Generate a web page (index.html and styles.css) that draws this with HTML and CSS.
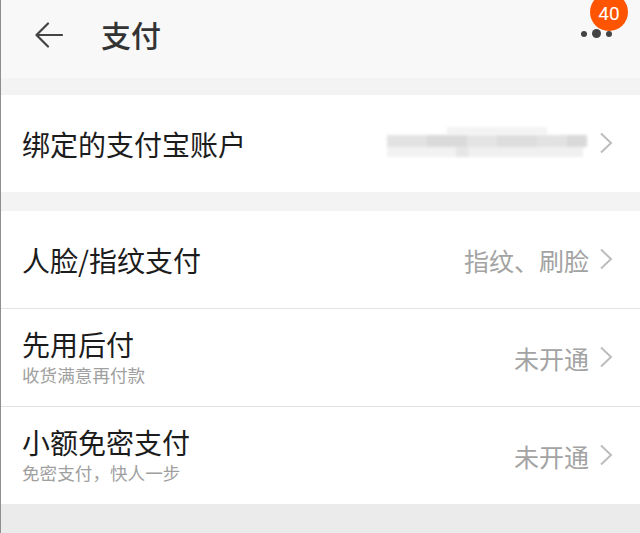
FILE: index.html
```html
<!DOCTYPE html>
<html lang="zh-CN">
<head>
<meta charset="utf-8">
<title>支付</title>
<link rel="stylesheet" href="styles.css">
</head>
<body>
<div class="page">
  <header class="topbar">
    <svg class="back" width="28" height="26" viewBox="0 0 28 26" aria-hidden="true">
      <path d="M27 13 H2 M13 1.5 L1.5 13 L13 24.5" fill="none" stroke="#444" stroke-width="2.2" stroke-linecap="round" stroke-linejoin="round"/>
    </svg>
    <h1 class="title">支付</h1>
    <div class="more">
      <span class="dot"></span><span class="dot dot-big"></span><span class="dot"></span>
      <span class="badge">40</span>
    </div>
  </header>

  <section class="card card-first">
    <div class="row">
      <div class="row-main"><div class="row-title">绑定的支付宝账户</div></div>
      <div class="row-value blurred" aria-label="隐藏的账户">
        <span class="mosaic m1"></span><span class="mosaic m2"></span><span class="mosaic m3"></span>
      </div>
      <svg class="chev" width="14" height="22" viewBox="0 0 14 22"><path d="M2 1.5 L12 11 L2 20.5" fill="none" stroke="#bdbdbd" stroke-width="2"/></svg>
    </div>
  </section>

  <section class="card card-second">
    <div class="row">
      <div class="row-main"><div class="row-title">人脸/指纹支付</div></div>
      <div class="row-value">指纹、刷脸</div>
      <svg class="chev" width="14" height="22" viewBox="0 0 14 22"><path d="M2 1.5 L12 11 L2 20.5" fill="none" stroke="#bdbdbd" stroke-width="2"/></svg>
    </div>
    <div class="row">
      <div class="row-main"><div class="row-title">先用后付</div><div class="row-sub">收货满意再付款</div></div>
      <div class="row-value">未开通</div>
      <svg class="chev" width="14" height="22" viewBox="0 0 14 22"><path d="M2 1.5 L12 11 L2 20.5" fill="none" stroke="#bdbdbd" stroke-width="2"/></svg>
    </div>
    <div class="row">
      <div class="row-main"><div class="row-title">小额免密支付</div><div class="row-sub">免密支付，快人一步</div></div>
      <div class="row-value">未开通</div>
      <svg class="chev" width="14" height="22" viewBox="0 0 14 22"><path d="M2 1.5 L12 11 L2 20.5" fill="none" stroke="#bdbdbd" stroke-width="2"/></svg>
    </div>
  </section>
</div>
</body>
</html>
```

FILE: styles.css
```css
* { box-sizing: border-box; }
html, body { margin: 0; padding: 0; }
body {
  width: 640px;
  height: 533px;
  overflow: hidden;
  background: #ebebeb;
  font-family: "Noto Sans CJK SC", "Noto Sans", sans-serif;
}
.page {
  height: 533px;
  border-left: 1px solid #8e8e8e;
  background: linear-gradient(#f3f3f3 0, #f3f3f3 503px, #ebebeb 503px);
}
.topbar {
  position: relative;
  height: 78px;
  background: #f8f8f8;
  display: flex;
  align-items: center;
  padding-left: 34px;
  padding-bottom: 6px;
}
.back { display: block; flex: none; margin-top: -2px; }
.title {
  margin: -4px 0 0 38px;
  font-size: 30px;
  font-weight: 500;
  color: #333;
  line-height: 1;
}
.more {
  position: absolute;
  left: 580px;
  top: 29px;
  display: flex;
  align-items: center;
  gap: 5px;
}
.dot {
  width: 6px; height: 6px; border-radius: 50%; background: #444;
}
.dot-big { width: 9px; height: 9px; }
.badge {
  position: absolute;
  left: 9px;
  top: -36px;
  width: 38px;
  height: 38px;
  border-radius: 50%;
  background: #ff5400;
  color: #fff;
  font-family: "Roboto", "Noto Sans", sans-serif;
  font-size: 19px;
  line-height: 1;
  display: flex;
  align-items: flex-end;
  justify-content: center;
  padding-bottom: 8px;
}
.card { background: #fff; }
.card-first { margin-top: 17px; }
.card-second { margin-top: 19px; }
.row {
  height: 97px;
  display: flex;
  align-items: center;
  padding: 0 27px 0 21px;
  position: relative;
}
.card-second .row + .row { border-top: 1px solid #e3e3e3; height: 98px; }
.row-main { flex: 1; }
.row-title {
  font-size: 28px;
  line-height: 40px;
  color: #1c1c1c;
}
.row-sub {
  font-size: 17.6px;
  line-height: 26px;
  color: #a0a0a0;
  margin-top: -2px;
}
.row-main:has(.row-sub) { margin-top: -3px; }
.row-value {
  font-size: 25px;
  color: #a3a3a3;
  margin-right: 10px;
}
.chev { display: block; flex: none; margin-top: -2px; }
.blurred {
  position: relative;
  width: 200px;
  height: 34px;
  margin-right: 12px;
  filter: blur(1.8px);
}
.mosaic { position: absolute; display: block; }
.m1 { left: 60px; top: 0; width: 100px; height: 7px; background: #f3f3f3; }
.m2 { left: 0; top: 8px; width: 200px; height: 12px;
  background: linear-gradient(90deg, #e2e2e2 0 20%, #dadada 20% 40%, #e4e4e4 40% 55%, #dddddd 55% 75%, #e2e2e2 75% 90%, #d9d9d9 90%); }
.m3 { left: 0; top: 20px; width: 196px; height: 10px;
  background: linear-gradient(90deg, #f2f2f2 0 35%, #e6e6e6 35% 42%, #f0f0f0 42% 100%); }
```
